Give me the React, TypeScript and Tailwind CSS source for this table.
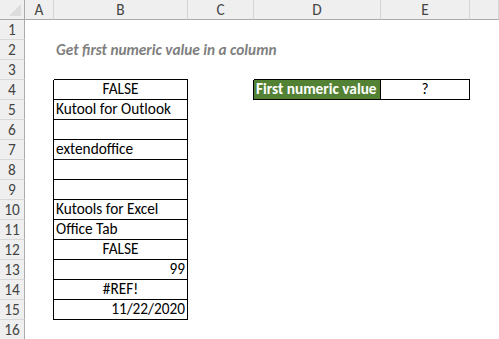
import React from "react";

const cols = ["A", "B", "C", "D", "E", ""];

type Cell = { text?: string; align?: "left" | "center" | "right" };

const bData: Record<number, Cell> = {
  4: { text: "FALSE", align: "center" },
  5: { text: "Kutool for Outlook", align: "left" },
  6: {},
  7: { text: "extendoffice", align: "left" },
  8: {},
  9: {},
  10: { text: "Kutools for Excel", align: "left" },
  11: { text: "Office Tab", align: "left" },
  12: { text: "FALSE", align: "center" },
  13: { text: "99", align: "right" },
  14: { text: "#REF!", align: "center" },
  15: { text: "11/22/2020", align: "right" },
};

const font = { fontFamily: "Carlito, Calibri, Lato, 'Liberation Sans', sans-serif" };

function alignCls(a?: string) {
  if (a === "center") return "justify-center";
  if (a === "right") return "justify-end";
  return "justify-start";
}

export default function App() {
  const rows = Array.from({ length: 16 }, (_, i) => i + 1);
  return (
    <div className="w-[499px] h-[339px] overflow-hidden bg-white text-[15.3px] text-black" style={font}>
      <div className="grid grid-cols-[25px_29px_134px_66px_127px_89px_1fr] auto-rows-[20px]">
        {/* header row */}
        <div className="relative bg-[#efefef] border-r border-b border-r-[#ababab] border-b-[#ababab]">
          <div className="absolute right-[3px] bottom-[3px] w-0 h-0 border-l-[12px] border-l-transparent border-b-[12px] border-b-[#dcdcdc]" />
        </div>
        {cols.map((c, i) => (
          <div
            key={i}
            className="bg-[#efefef] border-r border-b border-r-[#d4d4d4] border-b-[#ababab] flex items-center justify-center text-[#444] leading-none pt-[1px]"
          >
            {c}
          </div>
        ))}
        {rows.map((r) => (
          <React.Fragment key={r}>
            <div className="bg-[#efefef] border-r border-b border-r-[#ababab] border-b-[#d8d8d8] flex items-center justify-center text-[#444] leading-none pt-[1px]">
              {r}
            </div>
            {/* A */}
            <div className={r >= 4 && r <= 15 ? "border-r border-black" : ""} />
            {/* B */}
            <div
              className={
                "relative flex items-end px-[2px] pb-[1px] leading-[18px] whitespace-nowrap " +
                (r >= 3 && r <= 15 ? "border-b border-black " : "") +
                (r >= 4 && r <= 15 ? "border-r border-black " : "") +
                (bData[r] ? alignCls(bData[r].align) : "")
              }
            >
              {r === 2 ? (
                <span className="absolute left-[2px] bottom-[1px] italic font-bold text-[#7f7f7f]">
                  Get first numeric value in a column
                </span>
              ) : (
                bData[r]?.text
              )}
            </div>
            {/* C */}
            <div className={r === 4 ? "border-r border-black" : ""} />
            {/* D */}
            <div
              className={
                "flex items-end px-[2px] pb-[1px] leading-[18px] whitespace-nowrap " +
                (r === 3 ? "border-b border-black " : "") +
                (r === 4 ? "border-r border-b border-black bg-[#548235] text-white font-bold" : "")
              }
            >
              {r === 4 ? "First numeric value" : null}
            </div>
            {/* E */}
            <div
              className={
                "flex items-end justify-center px-[2px] pb-[1px] leading-[18px] " +
                (r === 3 ? "border-b border-black " : "") +
                (r === 4 ? "border-r border-b border-black" : "")
              }
            >
              {r === 4 ? "?" : null}
            </div>
            <div />
          </React.Fragment>
        ))}
      </div>
    </div>
  );
}
